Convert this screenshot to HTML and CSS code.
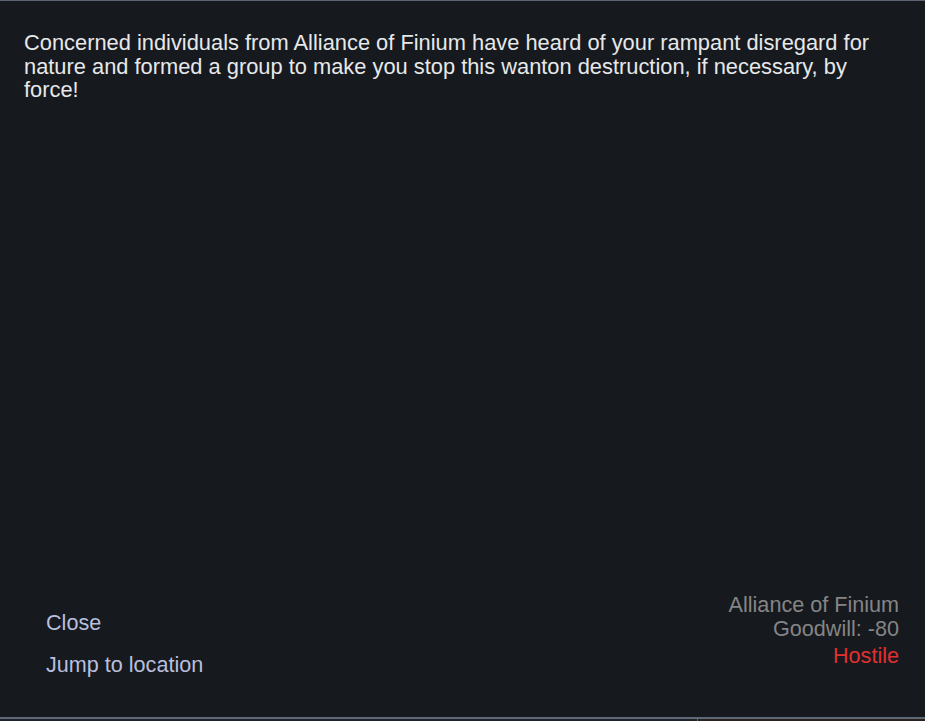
FILE: index.html
```html
<!DOCTYPE html>
<html lang="en">
  <head>
    <meta charset="UTF-8" />
    <title>Faction Event</title>
    <link rel="stylesheet" href="styles.css">
  </head>
  <body>
    <div class="dialog">
      <div class="event-text">
        Concerned individuals from Alliance of Finium have heard of your rampant disregard for
        nature and formed a group to make you stop this wanton destruction, if necessary, by
        force!
      </div>
      <div class="footer">
        <div class="actions">
          <button class="action">Close</button>
          <button class="action">Jump to location</button>
        </div>
        <div class="faction">
          <div class="faction-name">Alliance of Finium</div>
          <div class="goodwill">Goodwill: -80</div>
          <div class="relation hostile">Hostile</div>
        </div>
      </div>
    </div>
    <div class="world-strip">
      <div class="strip-left"></div>
      <div class="strip-right"></div>
    </div>
  </body>
</html>
```

FILE: styles.css
```css
* {
  margin: 0;
  padding: 0;
  box-sizing: border-box;
}

body {
  background: #16191e;
  font-family: "Liberation Sans", Arial, sans-serif;
  width: 925px;
  height: 721px;
  overflow: hidden;
}

.dialog {
  height: 719px;
  background: #16191e;
  border-top: 1px solid #5d6572;
  border-bottom: 2px solid #5e6877;
  display: flex;
  flex-direction: column;
  justify-content: space-between;
  padding: 30px 26px 34px 24px;
}

.event-text {
  color: #e6e8ea;
  font-size: 21.85px;
  line-height: 23.5px;
  width: 865px;
}

.footer {
  display: flex;
  justify-content: space-between;
  align-items: flex-end;
}

.actions {
  display: flex;
  flex-direction: column;
  gap: 18px;
  padding-left: 22px;
  padding-bottom: 6px;
}

.action {
  background: none;
  border: none;
  color: #b7bfdd;
  font-family: inherit;
  font-size: 21.6px;
  line-height: 24px;
  text-align: left;
  cursor: pointer;
}

.action:hover {
  color: #ffffff;
}

.faction {
  text-align: right;
  font-size: 21.6px;
  line-height: 24px;
  color: #858585;
  padding-bottom: 15px;
}

.relation {
  margin-top: 3px;
}

.hostile {
  color: #e0302f;
}

.world-strip {
  height: 2px;
  display: flex;
}

.strip-left {
  width: 698px;
  background: #1d232b;
  border-right: 1px solid #5e6877;
}

.strip-right {
  flex: 1;
  background: #2a221e;
}
```
